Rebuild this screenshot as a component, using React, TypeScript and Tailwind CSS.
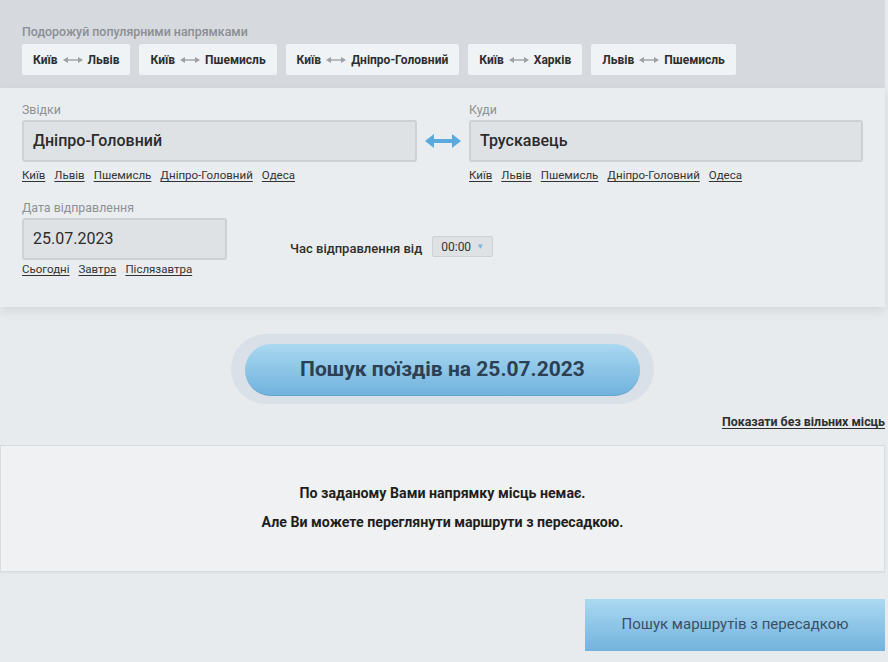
const ROUTES: Array<[string, string]> = [
  ['Київ', 'Львів'],
  ['Київ', 'Пшемисль'],
  ['Київ', 'Дніпро-Головний'],
  ['Київ', 'Харків'],
  ['Львів', 'Пшемисль'],
];

const CITIES = ['Київ', 'Львів', 'Пшемисль', 'Дніпро-Головний', 'Одеса'];
const DAYS = ['Сьогодні', 'Завтра', 'Післязавтра'];

function SmallArrow() {
  return (
    <svg width="20" height="8" viewBox="0 0 20 8" className="mx-[5px]">
      <line x1="3" y1="4" x2="17" y2="4" stroke="#9ca1a6" strokeWidth="1.4" />
      <path d="M0 4 L5 1 L5 7 Z" fill="#9ca1a6" />
      <path d="M20 4 L15 1 L15 7 Z" fill="#9ca1a6" />
    </svg>
  );
}

function SwapArrow() {
  return (
    <svg width="36" height="16" viewBox="0 0 36 16">
      <line x1="6" y1="8" x2="30" y2="8" stroke="#5aaade" strokeWidth="4" />
      <path d="M0 8 L9 1 L9 15 Z" fill="#5aaade" />
      <path d="M36 8 L27 1 L27 15 Z" fill="#5aaade" />
    </svg>
  );
}

function LinkRow({ items, top }: { items: string[]; top: string }) {
  return (
    <div className={`flex gap-[9px] ${top} text-[11.5px] leading-[14px] text-[#333]`}>
      {items.map((c) => (
        <span key={c} className="underline underline-offset-2 cursor-pointer">
          {c}
        </span>
      ))}
    </div>
  );
}

function Field({ label, value, bold, width }: { label: string; value: string; bold?: boolean; width: string }) {
  return (
    <div className={width}>
      <div className="text-[12.4px] leading-[14px] text-[#8d9196] mb-[3px]">{label}</div>
      <div className="h-[42px] rounded-[3px] border-2 border-[#cdd1d5] bg-[#dfe2e5] flex items-center px-[9px]">
        <span className={`text-[16px] text-[#2b2b2b] ${bold ? 'font-medium' : ''}`}>{value}</span>
      </div>
    </div>
  );
}

export default function App() {
  return (
    <div className="min-h-[662px] bg-[#e8ebee] font-['Roboto',sans-serif] w-[888px]">
      <div className="w-[885px]">
        {/* Popular routes */}
        <div className="h-[88px] bg-[#d6d9dd] px-[22px] pt-[25px]">
          <div className="text-[12.4px] leading-[14px] font-medium text-[#8b8f94] mb-[5px]">
            Подорожуй популярними напрямками
          </div>
          <div className="flex gap-[9px]">
            {ROUTES.map(([a, b]) => (
              <div
                key={a + b}
                className="h-[31px] bg-[#eff3f6] rounded-[2px] px-[11px] flex items-center text-[12px] font-bold text-[#2e2e2e]"
              >
                <span>{a}</span>
                <SmallArrow />
                <span>{b}</span>
              </div>
            ))}
          </div>
        </div>

        {/* Search form */}
        <div className="bg-[#eaedf0] px-[22px] pt-[15px] pb-[31px] shadow-[0_4px_10px_rgba(0,0,0,0.09)]">
          <div className="flex">
            <div>
              <Field label="Звідки" value="Дніпро-Головний" bold width="w-[395px]" />
              <LinkRow items={CITIES} top="mt-[6px]" />
            </div>
            <div className="w-[52px] flex justify-center pt-[30px]">
              <SwapArrow />
            </div>
            <div>
              <Field label="Куди" value="Трускавець" bold width="w-[394px]" />
              <LinkRow items={CITIES} top="mt-[6px]" />
            </div>
          </div>

          <div className="flex mt-[19px]">
            <div>
              <Field label="Дата відправлення" value="25.07.2023" width="w-[205px]" />
              <LinkRow items={DAYS} top="mt-[2px]" />
            </div>
            <div className="ml-[63px] pt-[34px] flex items-center h-fit">
              <span className="text-[13px] font-medium text-[#2e2e2e] mr-[10px] mt-[4px]">Час відправлення від</span>
              <div className="h-[21px] px-[8px] bg-[#dfe2e5] border border-[#cdd1d5] rounded-[2px] flex items-center gap-[5px]">
                <span className="text-[12px] text-[#333]">00:00</span>
                <span className="text-[8px] text-[#7eb3db]">▼</span>
              </div>
            </div>
          </div>
        </div>

        {/* Main search button */}
        <div className="flex justify-center pt-[27px]">
          <div className="rounded-full bg-[#dae0e7] px-[14px] pt-[10px] pb-[8px]">
            <button className="w-[395px] h-[52px] rounded-full bg-gradient-to-b from-[#aad8f1] to-[#6fb2dd] text-[21px] font-bold text-[#2c3f53] shadow-[inset_0_-1px_0_rgba(0,0,0,0.08)]">
              Пошук поїздів на 25.07.2023
            </button>
          </div>
        </div>

        <div className="flex justify-end mt-[9px]">
          <span className="text-[12.4px] font-bold text-[#2e2e2e] underline underline-offset-2">
            Показати без вільних місць
          </span>
        </div>

        {/* Empty result */}
        <div className="mt-[13px] h-[127px] bg-[#eff1f3] border border-[#d9dcdf] shadow-[0_1px_2px_rgba(0,0,0,0.05)] flex flex-col items-center justify-center gap-[8px] text-[14.2px] font-bold text-[#1e1e1e]">
          <div>По заданому Вами напрямку місць немає.</div>
          <div>Але Ви можете переглянути маршрути з пересадкою.</div>
        </div>

        <div className="flex justify-end mt-[27px]">
          <button className="w-[300px] h-[52px] bg-gradient-to-b from-[#abd9f1] to-[#72b3dd] text-[15px] text-[#3a4f66]">
            Пошук маршрутів з пересадкою
          </button>
        </div>
      </div>
    </div>
  );
}
